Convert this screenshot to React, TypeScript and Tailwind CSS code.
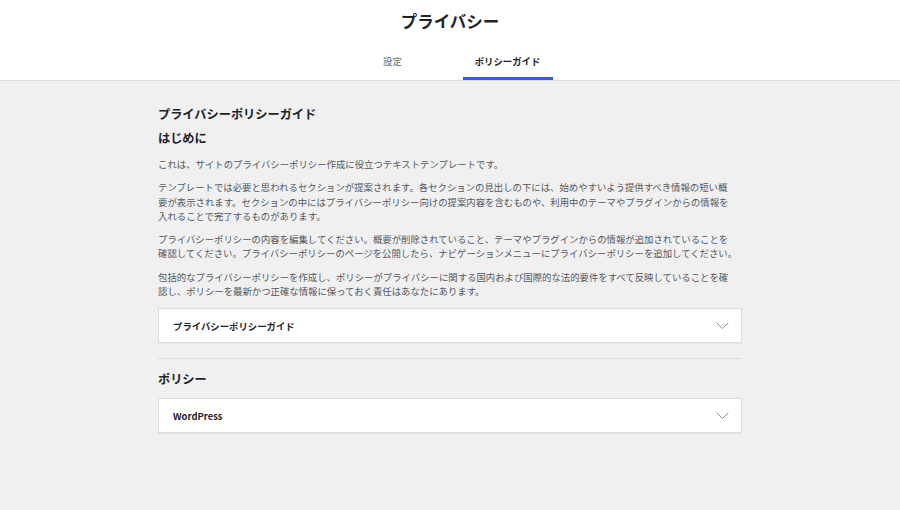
import React from "react";

const font = { fontFamily: '"Noto Sans CJK JP", "Noto Sans", sans-serif' };

function Chevron() {
  return (
    <svg width="13" height="8" viewBox="0 0 13 8" fill="none" className="shrink-0">
      <path d="M0.7 0.7 L6.5 6.5 L12.3 0.7" stroke="#8c8f94" strokeWidth="1" />
    </svg>
  );
}

function Accordion({ label }: { label: string }) {
  return (
    <div className="flex h-[35px] items-center justify-between border border-[#dcdcde] bg-white pl-[14px] pr-[12px] shadow-[0_1px_1px_rgba(0,0,0,0.04)]">
      <span className="text-[9.4px] font-semibold text-[#1d2327]">{label}</span>
      <Chevron />
    </div>
  );
}

export default function App() {
  const paras: string[][] = [
    ["これは、サイトのプライバシーポリシー作成に役立つテキストテンプレートです。"],
    [
      "テンプレートでは必要と思われるセクションが提案されます。各セクションの見出しの下には、始めやすいよう提供すべき情報の短い概",
      "要が表示されます。セクションの中にはプライバシーポリシー向けの提案内容を含むものや、利用中のテーマやプラグインからの情報を",
      "入れることで完了するものがあります。",
    ],
    [
      "プライバシーポリシーの内容を編集してください。概要が削除されていること、テーマやプラグインからの情報が追加されていることを",
      "確認してください。プライバシーポリシーのページを公開したら、ナビゲーションメニューにプライバシーポリシーを追加してください。",
    ],
    [
      "包括的なプライバシーポリシーを作成し、ポリシーがプライバシーに関する国内および国際的な法的要件をすべて反映していることを確",
      "認し、ポリシーを最新かつ正確な情報に保っておく責任はあなたにあります。",
    ],
  ];
  return (
    <div style={font} className="min-h-[510px] w-[900px] bg-[#f0f0f1] text-[#1d2327]">
      <header className="flex h-[81px] flex-col items-center border-b border-[#dcdcde] bg-white">
        <h1 className="mt-[9px] text-[16.5px] font-bold leading-[24px] text-[#1d2327]">プライバシー</h1>
        <nav className="mt-auto flex gap-[25px]">
          <div className="flex h-[38px] w-[90px] items-center justify-center border-b-[3px] border-transparent pt-[3px] text-[9.4px] text-[#646970]">
            設定
          </div>
          <div className="flex h-[38px] w-[90px] items-center justify-center border-b-[3px] border-[#3858e9] pt-[3px] text-[9.4px] font-semibold text-[#1d2327]">
            ポリシーガイド
          </div>
        </nav>
      </header>
      <main className="mx-auto w-[584px] pt-[24px]">
        <h2 className="text-[12.2px] font-bold leading-[18px]">プライバシーポリシーガイド</h2>
        <h3 className="mt-[6px] text-[12.2px] font-bold leading-[18px]">はじめに</h3>
        <div className="mt-[10px] flex flex-col gap-[9px] text-[9.4px] leading-[14.3px] text-[#50575e]">
          {paras.map((p, i) => (
            <p key={i} className="whitespace-nowrap">
              {p.map((line, j) => (
                <React.Fragment key={j}>
                  {line}
                  {j < p.length - 1 && <br />}
                </React.Fragment>
              ))}
            </p>
          ))}
        </div>
        <div className="mt-[10px]">
          <Accordion label="プライバシーポリシーガイド" />
        </div>
        <div className="mt-[15px] border-t border-[#dcdcde]" />
        <h2 className="mt-[11px] text-[12.2px] font-bold leading-[18px]">ポリシー</h2>
        <div className="mt-[10px]">
          <Accordion label="WordPress" />
        </div>
      </main>
    </div>
  );
}
